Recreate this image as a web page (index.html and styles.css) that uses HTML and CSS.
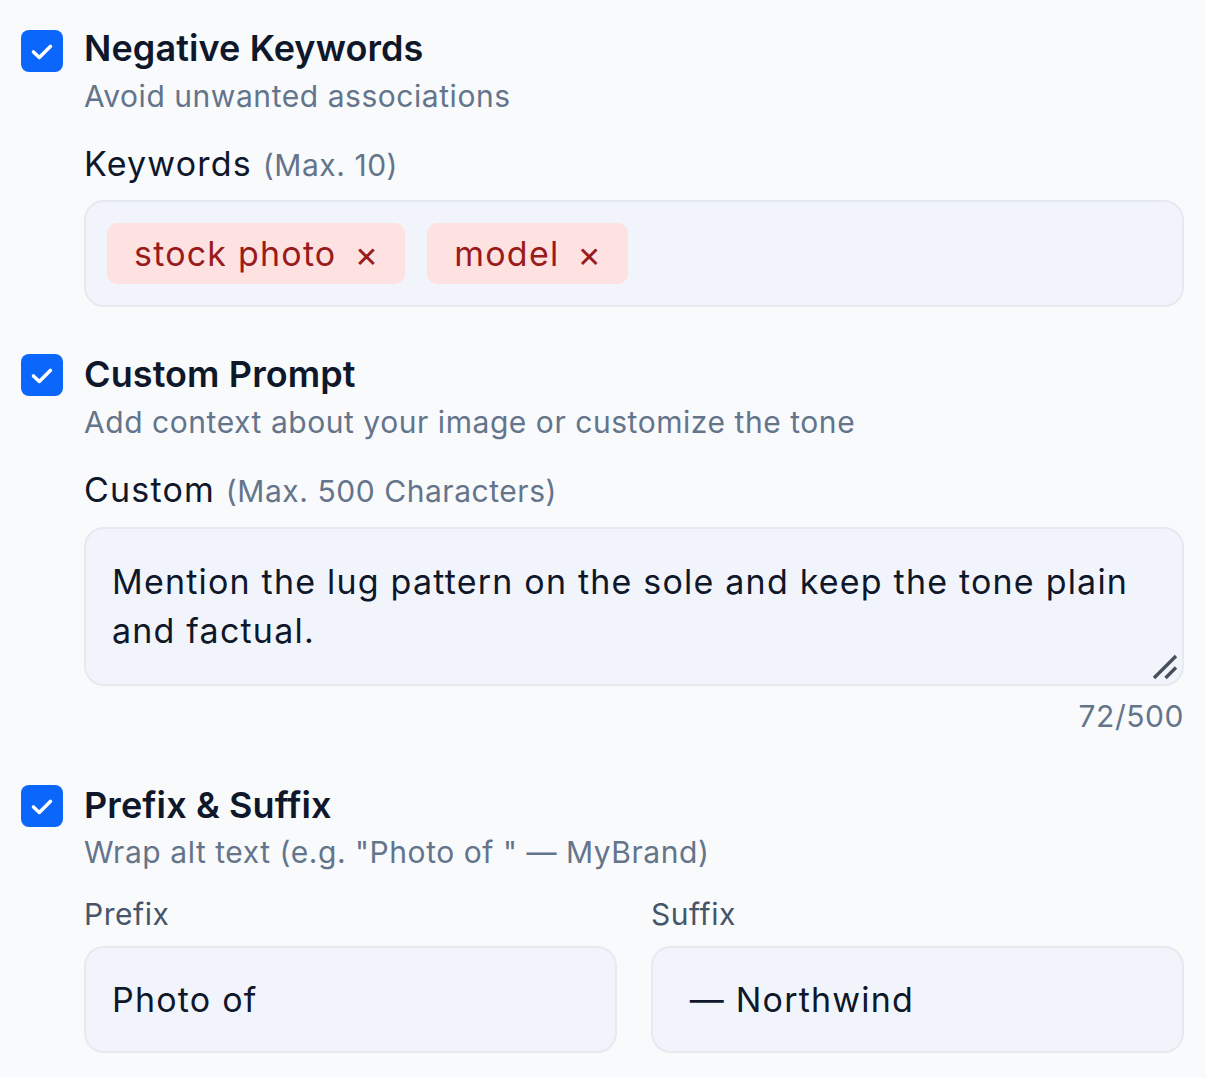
FILE: index.html
```html
<!DOCTYPE html>
<html lang="en">
<head>
<meta charset="utf-8">
<title>Alt text options</title>
<link rel="stylesheet" href="styles.css">
</head>
<body>
<main class="options">
  <section class="option option-neg">
    <span class="check"><svg viewBox="0 0 24 24" width="36" height="36"><polyline points="6.3,12.6 10.2,16.3 17.7,8.9" fill="none" stroke="#fff" stroke-width="2.3" stroke-linecap="round" stroke-linejoin="round"/></svg></span>
    <div class="body">
      <h2 class="title">Negative Keywords</h2>
      <p class="desc">Avoid unwanted associations</p>
      <div class="label">Keywords <span class="hint">(Max. 10)</span></div>
      <div class="field tags">
        <span class="chip">stock photo <span class="x">×</span></span>
        <span class="chip">model <span class="x">×</span></span>
      </div>
    </div>
  </section>

  <section class="option option-custom">
    <span class="check"><svg viewBox="0 0 24 24" width="36" height="36"><polyline points="6.3,12.6 10.2,16.3 17.7,8.9" fill="none" stroke="#fff" stroke-width="2.3" stroke-linecap="round" stroke-linejoin="round"/></svg></span>
    <div class="body">
      <h2 class="title">Custom Prompt</h2>
      <p class="desc">Add context about your image or customize the tone</p>
      <div class="label label-custom">Custom <span class="hint">(Max. 500 Characters)</span></div>
      <div class="field textarea">Mention the lug pattern on the sole and keep the tone plain and factual.
        <svg class="grip" viewBox="0 0 30 30" width="30" height="30"><line x1="4" y1="26" x2="26" y2="4" stroke="#474f5c" stroke-width="3.4"/><line x1="15.5" y1="26" x2="26" y2="15.5" stroke="#474f5c" stroke-width="3.4"/></svg>
      </div>
      <div class="counter">72/500</div>
    </div>
  </section>

  <section class="option option-wrap">
    <span class="check"><svg viewBox="0 0 24 24" width="36" height="36"><polyline points="6.3,12.6 10.2,16.3 17.7,8.9" fill="none" stroke="#fff" stroke-width="2.3" stroke-linecap="round" stroke-linejoin="round"/></svg></span>
    <div class="body">
      <h2 class="title">Prefix &amp; Suffix</h2>
      <p class="desc">Wrap alt text (e.g. "Photo of " — MyBrand)</p>
      <div class="pair">
        <div class="col">
          <div class="sublabel">Prefix</div>
          <div class="field input">Photo of </div>
        </div>
        <div class="col">
          <div class="sublabel">Suffix</div>
          <div class="field input"> — Northwind</div>
        </div>
      </div>
    </div>
  </section>
</main>
</body>
</html>
```

FILE: styles.css
```css
* { box-sizing: border-box; }
html, body { margin: 0; padding: 0; }
body {
  background: #f8fafc;
  font-family: Inter, "Noto Sans", sans-serif;
  color: #0f172a;
}
.options {
  padding: 26px 22px 0 21px;
}
.option {
  display: grid;
  grid-template-columns: 42px 1fr;
  column-gap: 21px;
}
.option-custom { margin-top: 45px; }
.option-wrap { margin-top: 47px; }
.check {
  width: 42px;
  height: 42px;
  margin-top: 4px;
  border-radius: 8px;
  background: #0b66fb;
  display: flex;
  align-items: center;
  justify-content: center;
}
.option-custom .check, .option-wrap .check { margin-top: 2px; }
.title {
  margin: 0;
  font-size: 36px;
  line-height: 44px;
  font-weight: 600;
  letter-spacing: 0.1px;
}
.desc {
  margin: 6px 0 0;
  font-size: 30px;
  line-height: 40px;
  letter-spacing: 0.55px;
  color: #64748b;
}
.option-wrap .desc { margin-top: 5px; }
.label {
  margin-top: 26px;
  font-size: 34px;
  line-height: 44px;
  letter-spacing: 1.2px;
}
.label-custom { margin-top: 26px; }
.hint {
  font-size: 30px;
  letter-spacing: 0.55px;
  color: #64748b;
}
.field {
  margin-top: 13px;
  background: #f1f5fb;
  border: 2px solid #e5e9f0;
  border-radius: 20px;
  font-size: 34px;
  letter-spacing: 1.2px;
}
.tags {
  display: flex;
  align-items: center;
  gap: 22px;
  height: 107px;
  padding: 0 21px;
}
.chip {
  display: inline-flex;
  align-items: center;
  height: 61px;
  padding: 0 27px 0 27px;
  gap: 18px;
  background: #fee2e2;
  color: #991b1b;
  border-radius: 10px;
  font-size: 34px;
  letter-spacing: 1.2px;
}
.chip .x { font-size: 36px; letter-spacing: 0; }
.textarea {
  position: relative;
  height: 159px;
  margin-top: 14px;
  padding: 28px 25px 0 26px;
  line-height: 49px;
}
.grip {
  position: absolute;
  right: 2px;
  bottom: 2px;
}
.counter {
  margin-top: 10px;
  text-align: right;
  font-size: 30px;
  line-height: 40px;
  letter-spacing: 0.55px;
  color: #64748b;
}
.pair {
  display: grid;
  grid-template-columns: 1fr 1fr;
  column-gap: 34px;
  margin-top: 22px;
}
.sublabel {
  font-size: 30px;
  line-height: 40px;
  letter-spacing: 0.55px;
  color: #475569;
}
.input {
  margin-top: 12px;
  height: 107px;
  display: flex;
  align-items: center;
  padding: 0 26px;
  white-space: pre;
}
```
